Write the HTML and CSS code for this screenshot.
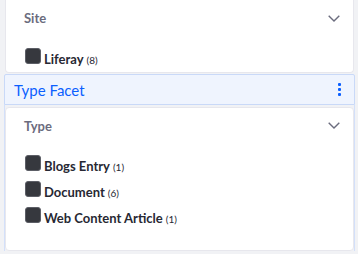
FILE: index.html
```html
<!DOCTYPE html>
<html>
<head>
<meta charset="utf-8">
<link rel="stylesheet" href="styles.css">
</head>
<body>
  <div class="card card-top">
    <div class="card-header">
      <span class="card-title">Site</span>
      <svg class="chevron" width="12" height="7" viewBox="0 0 12 7"><path d="M0.7 0.7 L6 6 L11.3 0.7" fill="none" stroke="#6b6c7e" stroke-width="1.4"/></svg>
    </div>
    <ul class="options options-site">
      <li class="option"><span class="check"></span><span class="label">Liferay</span><span class="count">(8)</span></li>
    </ul>
  </div>

  <div class="fragment">
    <div class="topper">
      <span class="topper-title">Type Facet</span>
      <span class="kebab"><i></i><i></i><i></i></span>
    </div>
    <div class="frame">
      <div class="card card-type">
        <div class="card-header">
          <span class="card-title">Type</span>
          <svg class="chevron" width="12" height="7" viewBox="0 0 12 7"><path d="M0.7 0.7 L6 6 L11.3 0.7" fill="none" stroke="#6b6c7e" stroke-width="1.4"/></svg>
        </div>
        <ul class="options options-type">
          <li class="option"><span class="check"></span><span class="label">Blogs Entry</span><span class="count">(1)</span></li>
          <li class="option"><span class="check"></span><span class="label">Document</span><span class="count">(6)</span></li>
          <li class="option"><span class="check"></span><span class="label">Web Content Article</span><span class="count">(1)</span></li>
        </ul>
      </div>
    </div>
  </div>
</body>
</html>
```

FILE: styles.css
```css
html, body {
  margin: 0;
  padding: 0;
}
body {
  background: #f1f2f5;
  font-family: Lato, "Open Sans", sans-serif;
  color: #272833;
  width: 358px;
  height: 254px;
  overflow: hidden;
}
.card {
  background: #ffffff;
  border: 1px solid #e7e7ed;
  border-radius: 4px;
  box-sizing: border-box;
}
.card-top {
  margin-left: 5px;
  width: 349px;
  height: 73px;
  border-top: none;
  border-radius: 0 0 4px 4px;
}
.card-header {
  height: 36px;
  box-sizing: border-box;
  display: flex;
  align-items: center;
  justify-content: space-between;
  padding: 0 13px 0 18px;
}
.card-type .card-header {
  height: 35px;
}
.card-title {
  font-size: 13px;
  font-weight: 700;
  color: #6b6c7e;
}
.chevron {
  display: block;
}
.options {
  list-style: none;
  margin: 0;
  padding: 0 0 0 19px;
}
.options-site {
  padding-top: 12px;
}
.options-type {
  padding-top: 12px;
  padding-bottom: 17px;
}
.option {
  display: flex;
  align-items: baseline;
  height: 26px;
}
.check {
  display: inline-block;
  width: 16px;
  height: 16px;
  box-sizing: border-box;
  background: #36383e;
  border: 1px solid #5c5e66;
  border-radius: 3px;
  margin-right: 3px;
}
.label {
  font-size: 13px;
  font-weight: 700;
  color: #272833;
}
.count {
  font-size: 10px;
  margin-left: 3px;
  color: #272833;
}
.fragment {
  margin: 1px 0 0 4px;
  width: 351px;
}
.topper {
  height: 31px;
  box-sizing: border-box;
  background: #eff4fe;
  border: 1px solid #c9d9f8;
  border-radius: 2px 2px 0 0;
  display: flex;
  align-items: center;
  justify-content: space-between;
  padding: 0 13px 0 9px;
}
.topper-title {
  font-size: 15px;
  color: #0b5fff;
}
.kebab {
  display: flex;
  flex-direction: column;
  gap: 2px;
}
.kebab i {
  display: block;
  width: 3px;
  height: 3px;
  border-radius: 1px;
  background: #0b5fff;
}
.frame {
  border-left: 1px solid #d3e0fa;
  border-right: 1px solid #d3e0fa;
  padding: 2px 0 0;
}
```
